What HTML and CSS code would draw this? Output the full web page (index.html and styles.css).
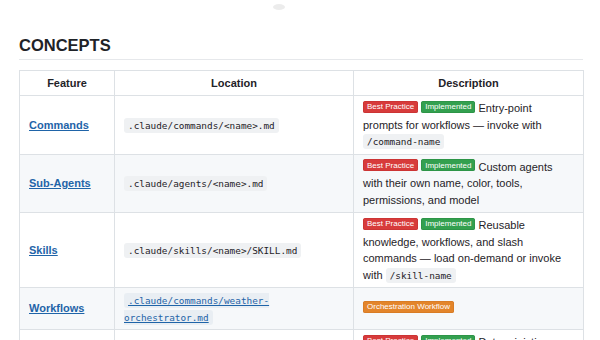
FILE: index.html
```html
<!DOCTYPE html>
<html>
<head>
<meta charset="utf-8">
<link rel="stylesheet" href="styles.css">
</head>
<body>
<div class="page">
  <div class="pill"></div>
  <h2 class="title">CONCEPTS</h2>
  <table class="concepts">
    <colgroup>
      <col class="c1"><col class="c2"><col class="c3">
    </colgroup>
    <thead>
      <tr><th>Feature</th><th>Location</th><th>Description</th></tr>
    </thead>
    <tbody>
      <tr>
        <td><a class="feat" href="#">Commands</a></td>
        <td><code>.claude/commands/&lt;name&gt;.md</code></td>
        <td><span class="badge red">Best Practice</span> <span class="badge green">Implemented</span> Entry-point prompts for workflows — invoke with <code>/command-name</code></td>
      </tr>
      <tr>
        <td><a class="feat" href="#">Sub-Agents</a></td>
        <td><code>.claude/agents/&lt;name&gt;.md</code></td>
        <td><span class="badge red">Best Practice</span> <span class="badge green">Implemented</span> Custom agents with their own name, color, tools, permissions, and model</td>
      </tr>
      <tr>
        <td><a class="feat" href="#">Skills</a></td>
        <td><code>.claude/skills/&lt;name&gt;/SKILL.md</code></td>
        <td><span class="badge red">Best Practice</span> <span class="badge green">Implemented</span> Reusable knowledge, workflows, and slash commands — load on-demand or invoke with <code>/skill-name</code></td>
      </tr>
      <tr>
        <td><a class="feat" href="#">Workflows</a></td>
        <td><a class="codelink" href="#"><code>.claude/commands/weather-orchestrator.md</code></a></td>
        <td><span class="badge orange">Orchestration Workflow</span></td>
      </tr>
      <tr>
        <td><a class="feat" href="#">Hooks</a></td>
        <td><code>.claude/hooks/</code></td>
        <td><span class="badge red">Best Practice</span> <span class="badge green">Implemented</span> Deterministic scripts that run outside the agentic loop on specific events</td>
      </tr>
    </tbody>
  </table>
</div>
</body>
</html>
```
FILE: styles.css
```css
html, body {
  margin: 0;
  padding: 0;
  background: #ffffff;
}
body {
  font-family: "Liberation Sans", Arial, sans-serif;
  font-size: 11px;
  line-height: 1.5;
  color: #1f2328;
}
.page {
  padding: 4px 17px 0 19px;
}
.pill {
  width: 12px;
  height: 6px;
  margin-left: 254px;
  border-radius: 50%;
  background: #ececec;
}
.title {
  margin: 25px 0 10px;
  padding-bottom: 3px;
  font-size: 16.5px;
  line-height: 1.25;
  font-weight: 700;
  border-bottom: 1px solid #e6e8eb;
}
.concepts {
  width: 564px;
  table-layout: fixed;
  border-collapse: collapse;
  border-spacing: 0;
}
.c1 { width: 95px; }
.c2 { width: 239px; }
.c3 { width: 230px; }
.concepts th,
.concepts td {
  padding: 4px 9px;
  border: 1px solid #dde1e5;
}
.concepts th {
  font-weight: 700;
  text-align: center;
}
.concepts tbody tr:nth-child(2n) {
  background: #f6f8fa;
}
.feat {
  color: #1f64a8;
  font-weight: 700;
  text-decoration: underline;
}
code {
  font-family: "DejaVu Sans Mono", "Liberation Mono", monospace;
  font-size: 9.4px;
  padding: 2px 4px;
  border-radius: 3px;
  background: #eff1f3;
}
.codelink {
  color: #1f64a8;
  text-decoration: underline;
}
.codelink code {
  background: #e9eef3;
}
.badge {
  display: inline-block;
  font-size: 8px;
  line-height: 11px;
  padding: 0.5px 4px;
  border-radius: 2.5px;
  color: #ffffff;
  vertical-align: 3px;
}
.red {
  background: #d73b3b;
  box-shadow: inset 0 0 0 0.5px #c22f2f;
}
.green {
  background: #33a04f;
  box-shadow: inset 0 0 0 0.5px #288a41;
}
.orange {
  background: #e3852b;
  box-shadow: inset 0 0 0 0.5px #cf7420;
}
```
